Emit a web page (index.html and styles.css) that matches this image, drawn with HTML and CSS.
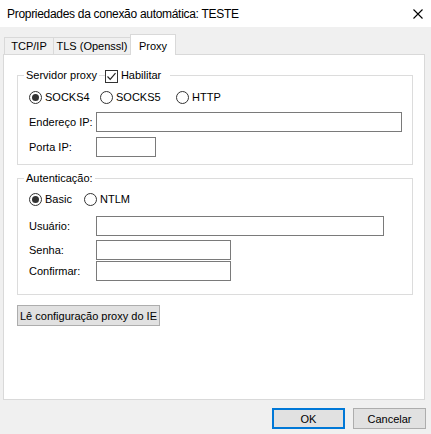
FILE: index.html
```html
<!DOCTYPE html>
<html lang="pt">
<head>
<meta charset="utf-8">
<title>Propriedades da conexão automática: TESTE</title>
<link rel="stylesheet" href="styles.css">
</head>
<body>
<div class="dialog">
  <div class="titlebar">
    <span class="title">Propriedades da conexão automática: TESTE</span>
    <svg class="close" width="10" height="10" viewBox="0 0 10 10"><path d="M0.5 0.5 L9.5 9.5 M9.5 0.5 L0.5 9.5" stroke="#000" stroke-width="1.1" fill="none"/></svg>
  </div>
  <div class="tabs">
    <div class="tab tab-tcp">TCP/IP</div>
    <div class="tab tab-tls">TLS (Openssl)</div>
    <div class="tab tab-proxy active">Proxy</div>
  </div>
  <div class="panel">
    <fieldset class="group group-server">
      <legend class="legend">
        <span class="legend-text">Servidor proxy</span>
        <span class="legend-line"></span>
        <span class="check-wrap"><span class="checkbox"><svg width="11" height="11" viewBox="0 0 11 11"><path d="M1.5 5.5 L4.2 8.3 L9.5 2.2" stroke="#222" stroke-width="1.2" fill="none"/></svg></span><span class="check-label">Habilitar</span></span>
      </legend>
      <div class="radio-row">
        <span class="radio-item w-socks4"><span class="radio checked"></span>SOCKS4</span>
        <span class="radio-item w-socks5"><span class="radio"></span>SOCKS5</span>
        <span class="radio-item"><span class="radio"></span>HTTP</span>
      </div>
      <div class="field-row row-endereco">
        <span class="field-label">Endereço IP:</span>
        <span class="input input-wide"></span>
      </div>
      <div class="field-row row-porta">
        <span class="field-label">Porta IP:</span>
        <span class="input input-porta"></span>
      </div>
    </fieldset>
    <fieldset class="group group-auth">
      <legend class="legend">
        <span class="legend-text">Autenticação:</span>
      </legend>
      <div class="radio-row">
        <span class="radio-item w-basic"><span class="radio checked"></span>Basic</span>
        <span class="radio-item"><span class="radio"></span>NTLM</span>
      </div>
      <div class="field-row row-usuario">
        <span class="field-label">Usuário:</span>
        <span class="input input-user"></span>
      </div>
      <div class="field-row row-senha">
        <span class="field-label">Senha:</span>
        <span class="input input-short"></span>
      </div>
      <div class="field-row row-confirmar">
        <span class="field-label">Confirmar:</span>
        <span class="input input-short"></span>
      </div>
    </fieldset>
    <button class="btn btn-ie" type="button">Lê configuração proxy do IE</button>
  </div>
  <div class="footer">
    <button class="btn btn-ok" type="button">OK</button>
    <button class="btn btn-cancel" type="button">Cancelar</button>
  </div>
</div>
</body>
</html>
```
FILE: styles.css
```css
* { box-sizing: border-box; }
html, body { margin: 0; padding: 0; }
body {
  width: 431px;
  height: 434px;
  background: #f0f0f0;
  font-family: "Liberation Sans", Arial, sans-serif;
  font-size: 11px;
  color: #000;
  overflow: hidden;
}
.dialog { width: 431px; height: 434px; }
.titlebar {
  height: 27px;
  background: #fff;
  display: flex;
  align-items: center;
  justify-content: space-between;
  padding: 0 8px 0 7px;
}
.title { font-size: 12px; line-height: 14px; padding-top: 1px; letter-spacing: -0.3px; }
.close { display: block; margin-top: 0; }
.tabs {
  display: flex;
  align-items: flex-end;
  height: 27px;
  padding: 7px 0 0 4px;
}
.tab {
  height: 17px;
  border: 1px solid #d9d9d9;
  border-bottom: none;
  background: #f0f0f0;
  line-height: 15px;
  padding-top: 1px;
  text-align: center;
  white-space: nowrap;
}
.tab-tcp { width: 50px; }
.tab-tls { width: 77px; margin-left: -1px; border-right: none; }
.tab-proxy { width: 46px; }
.tab.active {
  height: 21px;
  background: #fff;
  position: relative;
  z-index: 1;
  margin-bottom: -1px;
  padding-top: 4px;
}
.panel {
  margin: 0 6px 0 3px;
  height: 346px;
  border: 1px solid #d9d9d9;
  background: #fff;
  padding: 13px 0 0 13px;
}
.group {
  margin: 0;
  width: 396px;
  border: 1px solid #dcdcdc;
  padding: 0 0 0 11px;
  min-width: 0;
}
.legend {
  display: flex;
  align-items: center;
  height: 14px;
  padding: 0;
  margin-left: -5px;
}
.legend-text { padding: 0 2px; line-height: 14px; }
.legend-line {
  width: 6px;
  height: 1px;
  background: #dcdcdc;
  margin-top: 1px;
}
.check-wrap { display: flex; align-items: center; padding: 0 9px 0 0; }
.checkbox {
  width: 13px;
  height: 13px;
  border: 1px solid #333;
  background: #fff;
  display: flex;
  align-items: center;
  justify-content: center;
  margin-top: 2px;
}
.check-label { margin-left: 3px; line-height: 14px; }
.radio-row {
  display: flex;
  align-items: center;
  height: 14px;
  margin-top: 8px;
}
.radio-item { display: flex; align-items: center; white-space: nowrap; line-height: 14px; }
.w-socks4 { width: 71px; }
.w-socks5 { width: 76px; }
.w-basic { width: 55px; }
.radio {
  width: 13px;
  height: 13px;
  border: 1px solid #333;
  border-radius: 50%;
  background: #fff;
  margin-right: 3px;
  position: relative;
}
.radio.checked::after {
  content: "";
  position: absolute;
  left: 2px;
  top: 2px;
  width: 7px;
  height: 7px;
  border-radius: 50%;
  background: #333;
}
.field-row { display: flex; align-items: center; height: 20px; }
.field-label { width: 67px; line-height: 14px; }
.input {
  height: 20px;
  border: 1px solid #7a7a7a;
  background: #fff;
}
.input-wide { width: 306px; }
.input-porta { width: 60px; }
.input-user { width: 288px; }
.input-short { width: 135px; }
.row-endereco { margin-top: 8px; }
.row-porta { margin-top: 5px; margin-bottom: 9px; }
.group-server { height: 97px; }
.group-auth { margin-top: 6px; height: 124px; }
.group-auth .radio-row { margin-top: 7px; }
.row-usuario { margin-top: 10px; }
.row-senha { margin-top: 4px; }
.row-confirmar { margin-top: 1px; }
.btn {
  font-family: "Liberation Sans", Arial, sans-serif;
  font-size: 11px;
  color: #000;
  background: #e1e1e1;
  border: 1px solid #adadad;
  height: 21px;
  padding: 0;
  margin: 0;
  display: block;
}
.btn-ie { width: 143px; margin-top: 10px; }
.footer {
  display: flex;
  justify-content: flex-end;
  gap: 8px;
  padding: 8px 5px 0 0;
}
.btn-ok { width: 73px; border: 2px solid #0078d7; }
.btn-cancel { width: 73px; }
```
